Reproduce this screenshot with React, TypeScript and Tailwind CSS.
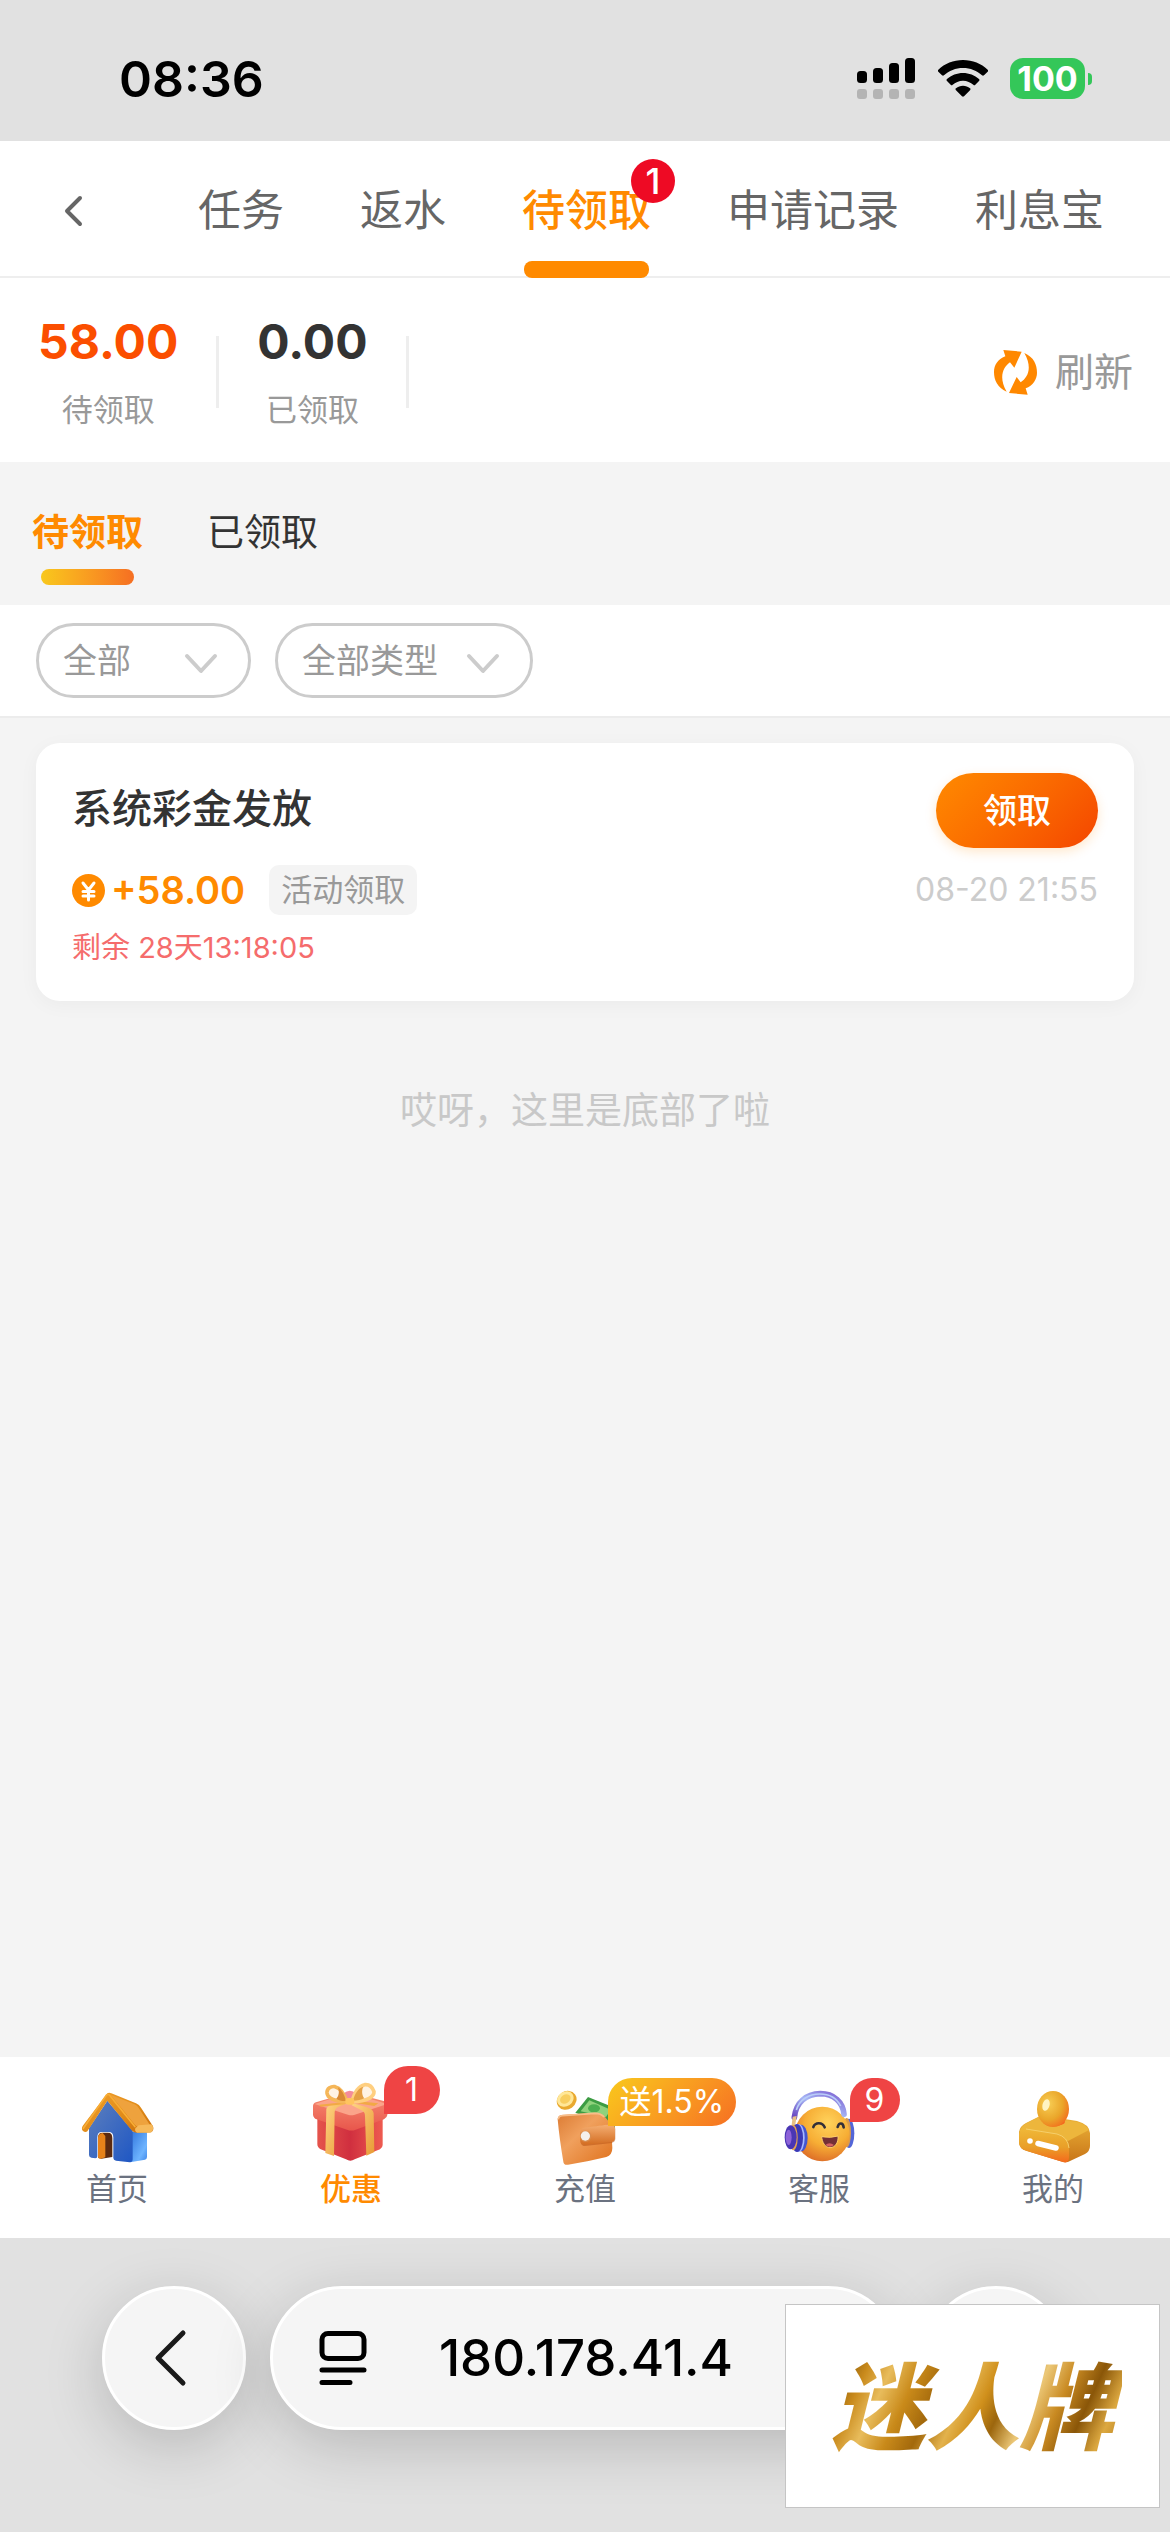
import React, { useState } from 'react';
import clsx from 'clsx';

interface FilterSelectProps {
  label: string;
  options: string[];
  className: string;
}

interface NavItem {
  label: string;
  icon: React.ReactNode;
  badge?: string;
  badgeClass?: string;
}

const TOP_TABS = ['任务', '返水', '待领取', '申请记录', '利息宝'];
const SUB_TABS = ['待领取', '已领取'];

const SignalIcon = () => (
  <svg width="58" height="41" viewBox="0 0 58 41" aria-hidden="true">
    <g fill="#000">
      <rect x="0" y="13" width="10" height="12" rx="3.500" />
      <rect x="16" y="10" width="10" height="15" rx="3.500" />
      <rect x="32" y="5" width="10" height="20" rx="3.500" />
      <rect x="48" y="0" width="10" height="25" rx="3.500" />
    </g>
    <g fill="#b4b4b4">
      <rect x="0" y="31" width="10" height="10" rx="3" />
      <rect x="16" y="31" width="10" height="10" rx="3" />
      <rect x="32" y="31" width="10" height="10" rx="3" />
      <rect x="48" y="31" width="10" height="10" rx="3" />
    </g>
  </svg>
);

const WifiIcon = () => (
  <svg width="50" height="37" viewBox="0 0 150 111" aria-hidden="true">
    <path d="M75 0C46 0 20 11 1 29c-2 2-2 4 0 6l11 11c2 2 4 2 6 0C33 32 53 24 75 24s42 8 57 22c2 2 4 2 6 0l11-11c2-2 2-4 0-6C130 11 104 0 75 0z" />
    <path d="M75 39c-18 0-35 7-48 18-2 2-2 4 0 6l11 11c2 2 4 2 6 0 8-7 19-12 31-12s23 5 31 12c2 2 4 2 6 0l11-11c2-2 2-4 0-6-13-11-30-18-48-18z" />
    <path d="M75 77c-8 0-15 3-21 8-2 1-2 4 0 6l18 18c2 2 4 2 6 0l18-18c2-2 2-5 0-6-6-5-13-8-21-8z" />
  </svg>
);

const RefreshIcon = () => (
  <svg width="43" height="45" viewBox="0 0 129 135" fill="#ff8800" aria-hidden="true">
    <path d="M28 0l55 5-22 48-13-16C27 52 13 82 38 125 10 113 0 90 0 66c0-20 11-38 34-47z" />
    <path d="M101 134l-56-5 23-48 12 16c22-15 36-44 11-88 28 12 38 35 38 59 0 20-12 38-34 47z" />
  </svg>
);

const CoinIcon = () => (
  <svg width="33" height="33" viewBox="0 0 33 33" aria-hidden="true">
    <circle cx="16.500" cy="16.500" r="16.500" fill="#ff8a00" />
    <path d="M11 9l5.500 7L22 9M16.500 16v10M11 17.500h11M11 22h11" fill="none" stroke="#fff" strokeWidth="3" strokeLinecap="round" strokeLinejoin="round" />
  </svg>
);

const HouseIcon = () => (
  <svg className="size-[75px]" viewBox="30 60 225 225" aria-hidden="true">
    <defs>
      <linearGradient id="houseFront" x1="0" y1="0" x2="1" y2="1">
        <stop offset="0" stopColor="#5d7fbd" />
        <stop offset="1" stopColor="#1f57c4" />
      </linearGradient>
      <linearGradient id="houseSide" x1="0" y1="0" x2="1" y2="1">
        <stop offset="0" stopColor="#2f74dc" />
        <stop offset="0.700" stopColor="#6eb4ff" />
        <stop offset="1" stopColor="#3f86e8" />
      </linearGradient>
      <linearGradient id="houseRoof" x1="0" y1="0" x2="1" y2="1">
        <stop offset="0" stopColor="#f0a02c" />
        <stop offset="0.600" stopColor="#e08a17" />
        <stop offset="1" stopColor="#c76c0c" />
      </linearGradient>
    </defs>
    <path d="M180 185l51 0v76q0 6-6 8l-45 8z" fill="url(#houseSide)" />
    <path d="M112 92l76 90v86q0 9-9 9l-41-5q-8-2-8-8v-62q0-16-14-16H95q-13 0-13 16v57q0 6-6 6l-12-2q-7-2-7-8v-80z" fill="url(#houseFront)" />
    <path d="M84 204q0-16 13-16h17q13 0 13 16v57l-33 5-10-3z" fill="#5b2a10" />
    <path d="M84 204q0-14 14-15l8 9v64l-13 4q-9 0-9-6z" fill="#e6821a" />
    <path d="M112 70q5-4 12 0l74 30q10 4 15 13l36 56q4 12-6 18l-42 1q-9 0-15-6L112 92l-60 92q-6 4-13-1-6-6-1-15z" fill="url(#houseRoof)" />
    <path d="M122 74l72 29q8 3 12 11l36 54-34 4q-8-1-13-7z" fill="#eea23d" />
    <path d="M206 166l39-3q8 10 2 20-2 5-8 5h-38q-8-5-5-13z" fill="#f6b95a" />
    <path d="M40 175l68-98q6-7 12 0l75 93" fill="none" stroke="#f8ad36" strokeWidth="5" strokeLinecap="round" />
  </svg>
);

const GiftIcon = () => (
  <svg className="size-[75px] overflow-visible" viewBox="733 60 225 225" aria-hidden="true">
    <defs>
      <linearGradient id="giftBody" x1="0" y1="0" x2="1" y2="0">
        <stop offset="0" stopColor="#e5544c" />
        <stop offset="0.500" stopColor="#d02f3f" />
        <stop offset="1" stopColor="#ee5b50" />
      </linearGradient>
      <linearGradient id="giftLid" x1="0" y1="0" x2="0" y2="1">
        <stop offset="0" stopColor="#f78e72" />
        <stop offset="1" stopColor="#e8564c" />
      </linearGradient>
      <linearGradient id="giftRibbon" x1="0" y1="0" x2="1" y2="1">
        <stop offset="0" stopColor="#ffd483" />
        <stop offset="1" stopColor="#e89a35" />
      </linearGradient>
    </defs>
    <path d="M743 140l98 35 98-30v80q0 8-8 13l-76 30q-13 8-26 0l-76-30q-10-6-10-15z" fill="url(#giftBody)" />
    <path d="M730 108q0-8 9-11l92-27q12-2 22 0l92 24q10 4 10 12l-2 29q-1 8-10 13l-85 31q-13 5-26 0l-91-31q-10-4-11-14z" fill="url(#giftLid)" />
    <path d="M735 102l102 33q8 2 16 0l100-33-100-30q-12-3-24 0z" fill="#fba48a" />
    <path d="M822 70q20-16 38 2l-8 30h-28z" fill="#f48b9a" />
    <path d="M770 116q6-10 22-13l38-9 6 5-26 10q-14 5-15 17l-2 132-26-9z" fill="url(#giftRibbon)" />
    <path d="M850 100l42 12q18 5 20 18l2 116-24 11-4-120q0-12-12-17l-28-14z" fill="url(#giftRibbon)" />
    <path d="M835 95l-86 9 4 6 82-9zM852 92l74 8-12 8-60-10z" fill="#f2a945" />
    {/* bow loops are thick rings, open in the middle */}
    <path d="M832 96c-30-2-58-9-60-27-1-14 13-21 24-19 16 4 28 21 36 46z" fill="#fff3e4" stroke="#f5b658" strokeWidth="11" strokeLinejoin="round" />
    <path d="M829 93c-5-20-13-34-24-41 5 14 2 27-5 34 8 5 18 8 29 7z" fill="#d98a35" />
    <path d="M847 95c6-24 17-46 38-51 12-1 23 6 28 21 1 15-18 28-66 30z" fill="#fff3e4" stroke="#ffcf80" strokeWidth="11" strokeLinejoin="round" />
    <path d="M850 92c6-22 15-37 31-42-6 12-4 26 3 35-9 5-20 7-34 7z" fill="#e5a046" />
    <rect x="827" y="84" width="27" height="20" rx="9" fill="#ffc45f" />
  </svg>
);

const WalletIcon = () => (
  <svg className="size-[75px]" viewBox="22 57 225 225" aria-hidden="true">
    <defs>
      <linearGradient id="walletBody" x1="0" y1="0" x2="1" y2="1">
        <stop offset="0" stopColor="#dc7b33" />
        <stop offset="0.400" stopColor="#f0a05d" />
        <stop offset="1" stopColor="#df711c" />
      </linearGradient>
      <linearGradient id="walletFlap" x1="0" y1="0" x2="0" y2="1">
        <stop offset="0" stopColor="#f5af73" />
        <stop offset="1" stopColor="#d36d22" />
      </linearGradient>
    </defs>
    <ellipse cx="78" cy="88" rx="31" ry="27" transform="rotate(-35 78 88)" fill="#e9a92f" />
    <ellipse cx="74" cy="84" rx="26" ry="22" transform="rotate(-35 74 84)" fill="#ffe798" />
    <ellipse cx="74" cy="84" rx="17" ry="13" transform="rotate(-35 74 84)" fill="#f8ce60" />
    <path d="M142 78l80 32v60l-118-45z" fill="#3c9c43" />
    <path d="M146 88l64 28-14 22-76-17z" fill="#90d27c" />
    <ellipse cx="160" cy="112" rx="18" ry="12" fill="#4caf50" />
    <path d="M51 145q0-11 12-13l98-7q23-1 34 15 14 14 17 37l3 54q0 21-18 27-60 15-115 23-13 2-14-9-12-70-17-127z" fill="url(#walletBody)" />
    <path d="M53 145q1-10 12-11l98-7q18 0 28 11" fill="none" stroke="#f7bd8a" strokeWidth="5" />
    <path d="M119 190q0-13 13-17l76-13q14-1 16 14v28q0 11-11 14l-80 9q-10 0-13-10z" fill="#b95617" opacity="0.550" />
    <path d="M119 185q0-13 13-15l76-10q13 0 15 13v27q0 10-11 13l-80 8q-12 0-13-12z" fill="url(#walletFlap)" />
    <circle cx="135" cy="196" r="17" fill="#d88c4d" />
    <circle cx="134" cy="195" r="14" fill="#f4f0ed" />
  </svg>
);

const ServiceIcon = () => (
  <svg className="size-[75px]" viewBox="725 60 225 225" aria-hidden="true">
    <defs>
      <radialGradient id="faceSkin" cx="0.600" cy="0.300" r="0.750">
        <stop offset="0" stopColor="#ffd35c" />
        <stop offset="0.550" stopColor="#f7ae35" />
        <stop offset="1" stopColor="#dc6a27" />
      </radialGradient>
      <linearGradient id="headBand" x1="0" y1="1" x2="1" y2="0">
        <stop offset="0" stopColor="#6744c0" />
        <stop offset="0.500" stopColor="#a6b6f5" />
        <stop offset="1" stopColor="#7b5dd0" />
      </linearGradient>
    </defs>
    <ellipse cx="926" cy="190" rx="16" ry="44" fill="#5366d8" />
    <ellipse cx="919" cy="188" rx="13" ry="44" fill="#d99b4c" />
    <circle cx="846" cy="192" r="82" fill="url(#faceSkin)" />
    <path d="M762 142c5-45 35-70 78-71 40 0 68 25 71 62" fill="none" stroke="url(#headBand)" strokeWidth="17" strokeLinecap="round" />
    <path d="M768 120c10-32 38-48 70-48 30 0 52 14 63 36" fill="none" stroke="#b9cdf8" strokeWidth="5" />
    <path d="M757 140l12-2-5 32-11 2z" fill="#e6c184" />
    <ellipse cx="782" cy="204" rx="20" ry="40" fill="#4456d0" />
    <ellipse cx="775" cy="204" rx="18" ry="42" fill="#a8b8ff" />
    <ellipse cx="770" cy="204" rx="18" ry="42" fill="#3b39b5" />
    <ellipse cx="759" cy="203" rx="13" ry="38" fill="#e6a251" />
    <ellipse cx="751" cy="202" rx="18" ry="36" fill="#4a36b4" />
    <ellipse cx="745" cy="202" rx="9" ry="23" fill="#8d63d8" />
    <path d="M819 171c6-15 27-15 34 1M892 171c4-14 16-14 18 1" fill="none" stroke="#333039" strokeWidth="8" strokeLinecap="round" />
    <path d="M844 200q27 5 49-2c2 17-7 35-24 35-15 0-24-17-25-33z" fill="#743036" stroke="#ffcf69" strokeWidth="3" />
    <path d="M855 225q12-11 26 0-12 11-26 0z" fill="#d46161" />
  </svg>
);

const ProfileIcon = () => (
  <svg className="size-[75px]" viewBox="0 0 75 75" aria-hidden="true">
    <defs>
      <radialGradient id="meHead" cx="0.350" cy="0.350" r="0.750">
        <stop offset="0" stopColor="#f8ce55" />
        <stop offset="0.600" stopColor="#eaa62a" />
        <stop offset="1" stopColor="#f46a1d" />
      </radialGradient>
      <linearGradient id="meFront" x1="0" y1="0" x2="0" y2="1">
        <stop offset="0" stopColor="#f0b838" />
        <stop offset="0.550" stopColor="#e99f28" />
        <stop offset="1" stopColor="#f5691c" />
      </linearGradient>
      <linearGradient id="meSide" x1="0" y1="0" x2="0" y2="1">
        <stop offset="0" stopColor="#edb53a" />
        <stop offset="1" stopColor="#c87518" />
      </linearGradient>
    </defs>
    <path d="M3 42q1-6 7-9l12-6q4-2 8-1l31 5q12 3 13 12v13q0 5-5 8L54 71q-3 2-7 1L11 61q-8-2-8-9z" fill="url(#meSide)" />
    <path d="M4 41q1-5 7-8l12-6 38 5q9 2 12 8L52 51z" fill="#edb63c" />
    <path d="M3 44q1-7 9-5l29 5q11 3 12 14v9q0 7-6 5L11 61q-8-2-8-9z" fill="url(#meFront)" />
    <path d="M10 39l31 5q11 3 12 14" fill="none" stroke="#f6cf6a" strokeWidth="1" />
    <ellipse cx="38" cy="32" rx="11" ry="4" fill="#f4651e" />
    <ellipse cx="37" cy="19" rx="16" ry="18" fill="url(#meHead)" />
    <ellipse cx="30" cy="15" rx="3.500" ry="6" fill="#fff4c4" transform="rotate(15 30 15)" />
    <circle cx="14" cy="51" r="2.800" fill="#fff" />
    <path d="M22 53.500l18 4.500" stroke="#fff" strokeWidth="5.500" strokeLinecap="round" />
  </svg>
);

const NAV_ITEMS: NavItem[] = [
  { label: '首页', icon: <HouseIcon /> },
  { label: '优惠', icon: <GiftIcon />, badge: '1', badgeClass: '-top-6 left-[70px] h-12 w-14 bg-[#ef4444]' },
  {
    label: '充值',
    icon: <WalletIcon />,
    badge: '送1.5%',
    badgeClass: '-top-3 left-[60px] h-12 px-3 bg-linear-135 from-[#f8c81c] to-[#f56e22]'
  },
  { label: '客服', icon: <ServiceIcon />, badge: '9', badgeClass: '-top-3 left-[68px] h-11 w-[50px] bg-[#ef4444]' },
  { label: '我的', icon: <ProfileIcon /> }
];

const FilterSelect: React.FC<FilterSelectProps> = ({ label, options, className }) => (
  <div className={clsx('relative', className)}>
    <select
      aria-label={label}
      className="h-[75px] w-full appearance-none rounded-full border-[3px] border-[#ccc] bg-white pl-6 text-[34px] text-[#999]"
    >
      {options.map(option => <option key={option}>{option}</option>)}
    </select>
    <svg className="pointer-events-none absolute top-7 right-8 h-6 w-9" viewBox="0 0 36 24" fill="none" aria-hidden="true">
      <path d="M4 5l14 15L32 5" stroke="#ccc" strokeWidth="4" strokeLinecap="round" strokeLinejoin="round" />
    </svg>
  </div>
);

const StatusBar = () => (
  <header className="flex h-[141px] items-center justify-between bg-[#e1e1e1] pt-4 pr-[78px] pl-[119px]">
    <time className="text-[50px] leading-none font-semibold text-black">08:36</time>
    <div className="flex items-center">
      <SignalIcon />
      <div className="ml-[23px]"><WifiIcon /></div>
      <div className="ml-[22px] flex h-[41px] w-[75px] items-center justify-center rounded-[13px] bg-[#34c759] text-[34px] font-bold text-white">
        100
      </div>
      <div className="ml-[3px] h-3 w-1 rounded-r-full bg-[#34c759]" />
    </div>
  </header>
);

const TopTabs = () => {
  const [active, setActive] = useState('待领取');

  return (
    <nav className="flex h-[137px] items-stretch border-b-2 border-[#eee] bg-white pl-[60px]">
      <button type="button" aria-label="返回" className="flex w-[138px] items-center pt-1">
        <svg width="26" height="38" viewBox="0 0 26 38" fill="none" aria-hidden="true">
          <path d="M20 6L7 19l13 13" stroke="#666" strokeWidth="4" strokeLinecap="round" strokeLinejoin="round" />
        </svg>
      </button>
      <div className="flex items-stretch gap-[76px]">
        {TOP_TABS.map(tab => (
          <button
            key={tab}
            type="button"
            onClick={() => setActive(tab)}
            className={clsx(
              'relative pt-1 text-[43px] whitespace-nowrap',
              tab === active ? 'font-medium text-[#ff8a00]' : 'text-[#666]'
            )}
          >
            {tab}
            {tab === '待领取' && (
              <span className="absolute top-[18px] -right-6 flex size-11 items-center justify-center rounded-full bg-[#ee0a24] text-[36px] leading-none font-medium text-white">
                1
              </span>
            )}
            {tab === active && <span className="absolute inset-x-0.5 -bottom-0.5 h-[17px] rounded-lg bg-[#ff8a00]" />}
          </button>
        ))}
      </div>
    </nav>
  );
};

const Summary = () => (
  <section className="flex items-center justify-between bg-white pt-[38px] pr-[37px] pb-[34px]">
    <dl className="flex items-center text-center">
      <div className="flex flex-col-reverse gap-6 px-[38px]">
        <dt className="text-[31px] leading-9 text-[#999]">待领取</dt>
        <dd className="text-[48px] leading-[52px] font-bold text-[#fb4e00]">58.00</dd>
      </div>
      <div className="h-[72px] w-[3px] bg-[#eee]" />
      <div className="flex flex-col-reverse gap-6 px-[38px]">
        <dt className="text-[31px] leading-9 text-[#999]">已领取</dt>
        <dd className="text-[48px] leading-[52px] font-bold text-[#333]">0.00</dd>
      </div>
      <div className="h-[72px] w-[3px] bg-[#eee]" />
    </dl>
    <button type="button" className="flex items-center gap-[18px] text-[39px] text-[#999]">
      <RefreshIcon />
      刷新
    </button>
  </section>
);

const SubTabs = () => {
  const [active, setActive] = useState('待领取');

  return (
    <div className="flex items-start gap-16 px-8 pt-[46px] pb-5">
      {SUB_TABS.map(tab => (
        <button key={tab} type="button" onClick={() => setActive(tab)} className="flex flex-col items-center gap-[11px]">
          <span className={clsx('text-[37px] leading-[50px]', tab === active ? 'font-bold text-[#ff8a00]' : 'text-[#333]')}>
            {tab}
          </span>
          {tab === active && <span className="h-4 w-[93px] rounded-lg bg-linear-to-r from-[#f8c81c] to-[#f56e22]" />}
        </button>
      ))}
    </div>
  );
};

const RewardCard = () => (
  <article className="mx-9 mt-[25px] rounded-3xl bg-white px-9 pt-[30px] pb-[35px] shadow-[0_4px_20px_rgba(0,0,0,0.040)]">
    <div className="flex items-center justify-between">
      <h2 className="pb-1 text-[40px] font-medium text-[#333]">系统彩金发放</h2>
      <button
        type="button"
        className="h-[75px] w-[162px] rounded-full bg-linear-135 from-[#ff8a00] to-[#f44400] text-[34px] font-medium text-white shadow-[0_4px_12px_rgba(255,138,0,0.200)]"
      >
        领取
      </button>
    </div>
    <div className="mt-[17px] flex h-[50px] items-center">
      <CoinIcon />
      <strong className="ml-1.5 text-[38px] font-semibold text-[#ff8a00]">+58.00</strong>
      <span className="ml-6 flex h-[50px] items-center rounded-[10px] bg-[#f4f4f4] px-3 text-[31px] text-[#999]">活动领取</span>
      <time className="ml-auto text-[32px] text-[#ccc]">08-20 21:55</time>
    </div>
    <p className="mt-[15px] text-[29px] leading-9 text-[#f56c6c]">剩余 28天13:18:05</p>
  </article>
);

const BottomNav = () => (
  <nav className="relative z-10 grid grid-cols-5 bg-white pt-[33px] pb-[29px]">
    {NAV_ITEMS.map(({ label, icon, badge, badgeClass }) => (
      <a key={label} href="#" className="flex flex-col items-center gap-1">
        <span className="relative">
          {icon}
          {badge && (
            <span
              className={clsx(
                'absolute flex items-center justify-center rounded-full rounded-bl-none text-[32px] leading-none whitespace-nowrap text-white',
                badgeClass
              )}
            >
              {badge}
            </span>
          )}
        </span>
        <span className={clsx('text-[31px] leading-10', label === '优惠' ? 'font-medium text-[#ff8a00]' : 'text-[#6b7280]')}>
          {label}
        </span>
      </a>
    ))}
  </nav>
);

const BrowserBar = () => (
  <footer className="relative flex gap-6 overflow-hidden bg-[#e1e1e1] px-[102px] pt-12 pb-[102px]">
    <button
      type="button"
      aria-label="后退"
      className="flex size-36 shrink-0 items-center justify-center rounded-full border-[3px] border-white bg-[#f5f5f5] pr-2 shadow-[0_16px_60px_rgba(0,0,0,0.180)]"
    >
      <svg width="34" height="58" viewBox="0 0 34 58" fill="none" aria-hidden="true">
        <path d="M30 4L5 29l25 25" stroke="#1a1a1a" strokeWidth="5" strokeLinecap="round" strokeLinejoin="round" />
      </svg>
    </button>
    <div className="flex h-36 min-w-0 flex-1 items-center rounded-full border-[3px] border-white bg-[#f5f5f5] px-[46px] shadow-[0_16px_60px_rgba(0,0,0,0.180)]">
      <button type="button" aria-label="页面菜单">
        <svg width="48" height="54" viewBox="0 0 48 54" fill="none" stroke="#000" strokeWidth="5" strokeLinecap="round" aria-hidden="true">
          <rect x="3" y="2.500" width="42" height="25" rx="6" />
          <path d="M3 39h42M3 51.500h28" />
        </svg>
      </button>
      <input
        type="text"
        aria-label="网址"
        defaultValue="180.178.41.4"
        className="mr-[46px] min-w-0 flex-1 bg-transparent text-center text-[51px] font-medium text-black outline-none"
      />
    </div>
    <button
      type="button"
      aria-label="更多"
      className="size-36 shrink-0 rounded-full border-[3px] border-white bg-[#f5f5f5] shadow-[0_16px_60px_rgba(0,0,0,0.180)]"
    />
    {/* brand stamp floating over the toolbar */}
    <div className="absolute right-[10px] bottom-6 flex h-[204px] w-[375px] items-center justify-center border border-[#c5c5c5] bg-white pt-1">
      <span className="bg-[linear-gradient(115deg,#b87a12_0%,#8a5a08_8%,#c98a1c_15%,#e8bc5c_22%,#c98a1a_30%,#a3690c_38%,#e3b24c_46%,#d0901c_52%,#9c660d_58%,#ecc878_66%,#c98a22_74%,#8a5608_82%,#dca840_90%,#a86e10_100%)] bg-clip-text px-2 text-[94px] leading-[120px] font-black text-transparent italic">
        迷人牌
      </span>
    </div>
  </footer>
);

export default function App() {
  return (
    <div className="flex min-h-screen flex-col bg-[#f4f4f4] font-['Inter','Noto_Sans_CJK_SC',sans-serif]">
      <StatusBar />
      <TopTabs />
      <main className="flex-1">
        <Summary />
        <SubTabs />
        <div className="flex gap-6 border-b-2 border-[#ececec] bg-white px-9 py-[18px]">
          <FilterSelect label="状态" options={['全部', '今日', '昨日']} className="w-[215px]" />
          <FilterSelect label="类型" options={['全部类型', '活动领取']} className="w-[258px]" />
        </div>
        <RewardCard />
        <p className="mt-[85px] text-center text-[37px] leading-[50px] text-[#c8c8c8]">哎呀，这里是底部了啦</p>
      </main>
      <BottomNav />
      <BrowserBar />
    </div>
  );
}
